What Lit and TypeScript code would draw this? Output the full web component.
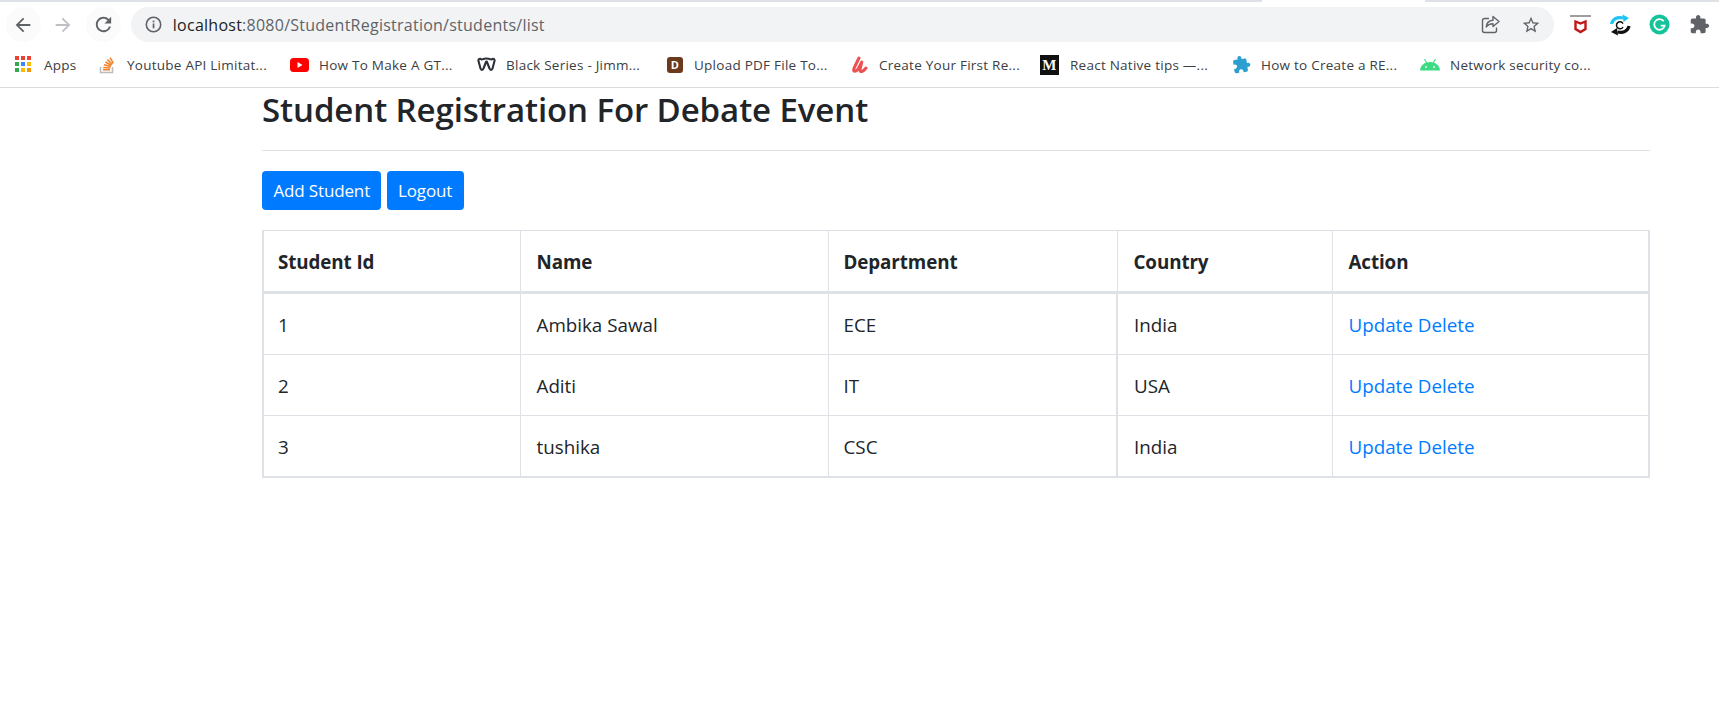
import { LitElement, css, html, svg } from "lit";
import { customElement } from "lit/decorators.js";
import { styleMap } from "lit/directives/style-map.js";

const students = [
  { id: 1, name: "Ambika Sawal", department: "ECE", country: "India" },
  { id: 2, name: "Aditi", department: "IT", country: "USA" },
  { id: 3, name: "tushika", department: "CSC", country: "India" },
];

const appsIcon = svg`<svg width="17" height="17" viewBox="0 0 17 17">
  <rect x="0" y="0" width="4" height="4" fill="#ea4335"/><rect x="6" y="0" width="4" height="4" fill="#ea4335"/><rect x="12" y="0" width="4" height="4" fill="#ea4335"/>
  <rect x="0" y="6" width="4" height="4" fill="#34a853"/><rect x="6" y="6" width="4" height="4" fill="#4285f4"/><rect x="12" y="6" width="4" height="4" fill="#fbbc04"/>
  <rect x="0" y="12" width="4" height="4" fill="#34a853"/><rect x="6" y="12" width="4" height="4" fill="#fbbc04"/><rect x="12" y="12" width="4" height="4" fill="#f29900"/>
</svg>`;

const stackIcon = svg`<svg width="16" height="18" viewBox="0 0 16 18">
  <path d="M1.5 11v5.5h12V11" fill="none" stroke="#bcbbbb" stroke-width="1.5"/>
  <path d="M4 13.7h7M4.3 11.4l7 .6M5 8.8l6.8 1.8M6.4 6l6 3.4M8.4 3.6l5 4.8M11 1.6l3.4 5.6" stroke="#f48024" stroke-width="1.5" fill="none"/>
</svg>`;

const youtubeIcon = svg`<svg width="19" height="14" viewBox="0 0 19 14">
  <rect width="19" height="14" rx="3.5" fill="#ff0000"/><path d="M7.5 4l5 3-5 3z" fill="#fff"/>
</svg>`;

const weeblyIcon = svg`<svg width="19" height="15" viewBox="0 0 19 15">
  <path d="M4.500 2.500C3 1 1 2 1.500 4l2 7.500c.5 1.800 2.400 1.800 3 0L9 5c.2-.7.8-.7 1 0l2.500 6.500c.6 1.800 2.500 1.800 3 0l2-7.500c.5-2-1.500-3-3-1.500M6 2.200c1.500-1 5.500-1 7 0" fill="none" stroke="#2b3136" stroke-width="2.100" stroke-linecap="round" stroke-linejoin="round"/>
</svg>`;

const udemyIcon = svg`<svg width="20" height="18" viewBox="0 0 20 18">
  <path d="M9 2C7 6 5 10 3.800 13c-.8 3 2.200 3.200 4.200.2L11.800 6c-.6 3-1.600 6-1.800 8-.2 2.500 3 2 6-2" fill="none" stroke="#ec5252" stroke-width="3" stroke-linecap="round" stroke-linejoin="round"/>
</svg>`;

const puzzleBlue = svg`<svg width="19" height="19" viewBox="0 0 24 24">
  <g transform="rotate(-8 12 12)"><path fill="#2a9fd0" d="M20.500 11H19V7c0-1.100-.9-2-2-2h-4V3.500C13 2.120 11.880 1 10.500 1S8 2.120 8 3.500V5H4c-1.100 0-1.990.9-1.990 2v3.800H3.500c1.490 0 2.700 1.210 2.700 2.700s-1.210 2.700-2.700 2.700H2V20c0 1.100.9 2 2 2h3.800v-1.500c0-1.490 1.210-2.700 2.700-2.700 1.490 0 2.700 1.210 2.700 2.700V22H17c1.100 0 2-.9 2-2v-4h1.500c1.380 0 2.500-1.120 2.500-2.500S21.880 11 20.500 11z"/></g>
</svg>`;

const androidIcon = svg`<svg width="20" height="12" viewBox="0 0 20 12">
  <path d="M0 11.500C.3 6.500 4.500 3 10 3s9.700 3.500 10 8.500z" fill="#3ddc84"/>
  <path d="M4.500 0l2.500 4.500M15.500 0L13 4.500" stroke="#3ddc84" stroke-width="1.100"/>
  <circle cx="6" cy="8" r=".9" fill="#fff"/><circle cx="14" cy="8" r=".9" fill="#fff"/>
</svg>`;

// widths hold each bookmark's slot, so the next favicon lands where Chrome put it
const bookmarks = [
  { label: "Apps", width: 84, gap: 12, icon: html`${appsIcon}` },
  { label: "Youtube API Limitat...", width: 191, gap: 12, icon: html`${stackIcon}` },
  { label: "How To Make A GT...", width: 187, gap: 10, icon: html`${youtubeIcon}` },
  { label: "Black Series - Jimm...", width: 190, gap: 10, icon: html`${weeblyIcon}` },
  { label: "Upload PDF File To...", width: 183, gap: 11, icon: html`<span class="fav-d">D</span>` },
  { label: "Create Your First Re...", width: 190, gap: 9, icon: html`${udemyIcon}` },
  { label: "React Native tips —...", width: 192, gap: 11, icon: html`<span class="fav-m">M</span>` },
  { label: "How to Create a RE...", width: 188, gap: 10, icon: html`${puzzleBlue}` },
  { label: "Network security co...", width: 200, gap: 10, icon: html`${androidIcon}` },
];

@customElement("app-root")
export class AppRoot extends LitElement {
  renderToolbar() {
    return html`
      <div class="toolbar">
        <div class="nav nav--hover">
          <svg width="22" height="22" viewBox="0 0 24 24"><path fill="#5f6368" d="M20 11H7.830l5.590-5.590L12 4l-8 8 8 8 1.410-1.410L7.830 13H20z"/></svg>
        </div>
        <div class="nav">
          <svg width="22" height="22" viewBox="0 0 24 24"><path fill="#bdc1c6" d="M4 11h12.170l-5.590-5.590L12 4l8 8-8 8-1.410-1.410L16.170 13H4z"/></svg>
        </div>
        <div class="nav nav--hover">
          <svg width="23" height="23" viewBox="0 0 24 24"><path fill="#5f6368" d="M17.650 6.350A7.958 7.958 0 0 0 12 4c-4.420 0-7.990 3.580-7.990 8s3.570 8 7.990 8c3.730 0 6.840-2.550 7.730-6h-2.080A5.990 5.990 0 0 1 12 18c-3.310 0-6-2.690-6-6s2.690-6 6-6c1.660 0 3.140.69 4.220 1.780L13 11h7V4l-2.350 2.350z"/></svg>
        </div>
        <div class="omnibox">
          <svg class="info" width="17" height="17" viewBox="0 0 17 17">
            <circle cx="8.500" cy="8.500" r="7.200" fill="none" stroke="#5f6368" stroke-width="1.600"/>
            <rect x="7.700" y="7.500" width="1.700" height="4.800" fill="#5f6368"/><rect x="7.700" y="4.600" width="1.700" height="1.700" fill="#5f6368"/>
          </svg>
          <span class="url"><span class="url__host">localhost</span>:8080/StudentRegistration/students/list</span>
          <svg class="share" width="19" height="19" viewBox="0 0 19 19">
            <path d="M8 3.500H3.500a2 2 0 0 0-2 2v10a2 2 0 0 0 2 2h10a2 2 0 0 0 2-2v-3" fill="none" stroke="#5f6368" stroke-width="1.400"/>
            <path d="M12 1.500l6 5-6 5V8.700c-3.300 0-5.300 1-6.700 3.300.3-3.800 2.700-6.400 6.700-6.700z" fill="none" stroke="#5f6368" stroke-width="1.400" stroke-linejoin="round"/>
          </svg>
          <svg class="star" width="20" height="20" viewBox="0 0 24 24"><path fill="#5f6368" d="M22 9.240l-7.190-.62L12 2 9.190 8.630 2 9.240l5.460 4.730L5.820 21 12 17.270 18.180 21l-1.630-7.030L22 9.240zM12 15.400l-3.760 2.270 1-4.280-3.320-2.880 4.380-.38L12 6.100l1.710 4.040 4.380.38-3.320 2.880 1 4.280L12 15.400z"/></svg>
        </div>
        <div class="extensions">
          <div class="ext">
            <svg width="22" height="20" viewBox="0 0 22 20">
              <rect x="0" y="0" width="21" height="2" fill="#9e9e9e"/>
              <path d="M5.500 6.500l5 2 5-2v7.500l-5 3-5-3z" fill="none" stroke="#c01818" stroke-width="2.400"/>
            </svg>
          </div>
          <div class="ext">
            <svg width="22" height="22" viewBox="0 0 22 22">
              <path d="M2.500 10C3.500 5 8 2.500 14 4" fill="none" stroke="#1fc4f4" stroke-width="3.200"/>
              <path d="M13.500 .5l6.500 3.500-5.500 4z" fill="#1fc4f4"/>
              <path d="M20 12c-1 5-5.500 7.500-11.500 6" fill="none" stroke="#111" stroke-width="3.200"/>
              <path d="M9 21.500L2 18l6-4z" fill="#111"/>
              <path d="M14 9.500a3.500 3.500 0 1 0 0 3.500" fill="none" stroke="#111" stroke-width="1.500"/>
            </svg>
          </div>
          <div class="ext">
            <svg width="21" height="21" viewBox="0 0 21 21">
              <circle cx="10.500" cy="10.500" r="10" fill="#15c39a"/>
              <path d="M14.800 7.300a5.300 5.300 0 1 0 .9 4.300h-4" fill="none" stroke="#fff" stroke-width="1.800"/>
            </svg>
          </div>
          <div class="ext">
            <svg width="21" height="21" viewBox="0 0 24 24"><path fill="#5f6368" d="M20.500 11H19V7c0-1.100-.9-2-2-2h-4V3.500C13 2.120 11.880 1 10.500 1S8 2.120 8 3.500V5H4c-1.100 0-1.990.9-1.990 2v3.800H3.500c1.490 0 2.700 1.210 2.700 2.700s-1.210 2.700-2.700 2.700H2V20c0 1.100.9 2 2 2h3.800v-1.500c0-1.490 1.210-2.700 2.700-2.700 1.490 0 2.700 1.210 2.700 2.700V22H17c1.100 0 2-.9 2-2v-4h1.500c1.380 0 2.500-1.120 2.500-2.500S21.880 11 20.500 11z"/></svg>
          </div>
        </div>
      </div>
    `;
  }

  render() {
    return html`
      <div class="tabstrip"><span class="tabstrip__gap"></span></div>
      ${this.renderToolbar()}
      <div class="bookmarks">
        ${bookmarks.map(
          (b) => html`<div
            class="bookmark"
            style=${styleMap({ width: `${b.width}px`, gap: `${b.gap}px` })}
          >
            ${b.icon}<span>${b.label}</span>
          </div>`,
        )}
      </div>
      <main class="page">
        <h2 class="title">Student Registration For Debate Event</h2>
        <hr class="rule" />
        <div class="actions">
          <a class="btn">Add Student</a>
          <a class="btn btn--logout">Logout</a>
        </div>
        <table class="students">
          <colgroup>
            <col class="col-id" />
            <col class="col-name" />
            <col class="col-dept" />
            <col class="col-country" />
            <col class="col-action" />
          </colgroup>
          <thead>
            <tr>
              <th>Student Id</th>
              <th>Name</th>
              <th>Department</th>
              <th>Country</th>
              <th>Action</th>
            </tr>
          </thead>
          <tbody>
            ${students.map(
              (s) => html`<tr>
                <td>${s.id}</td>
                <td>${s.name}</td>
                <td>${s.department}</td>
                <td>${s.country}</td>
                <td><a class="link">Update</a> <a class="link">Delete</a></td>
              </tr>`,
            )}
          </tbody>
        </table>
      </main>
    `;
  }

  static styles = css`
    :host {
      display: block;
      height: 703px;
      overflow: hidden;
      background: #fff;
      font-family: "Open Sans", "Noto Sans", sans-serif;
      color: #212529;
    }

    .tabstrip {
      height: 2px;
      background: #dee1e6;
      padding-left: 1262px;
    }

    .tabstrip__gap {
      display: block;
      width: 163px;
      height: 2px;
      background: #fff;
    }

    .toolbar {
      display: flex;
      align-items: center;
      height: 40px;
      padding-top: 5px;
      padding-left: 6px;
      box-sizing: border-box;
      gap: 5px;
    }

    .nav {
      width: 35px;
      height: 35px;
      border-radius: 50%;
      display: flex;
      align-items: center;
      justify-content: center;
    }

    .nav--hover {
      background: #fbfbfb;
    }

    .omnibox {
      margin-left: 5px;
      width: 1426px;
      height: 35px;
      box-sizing: border-box;
      border-radius: 18px;
      background: #f1f3f4;
      display: flex;
      align-items: center;
      padding-left: 14px;
    }

    .url {
      margin-left: 11px;
      flex: 1;
      font-size: 16px;
      letter-spacing: 0.25px;
      color: #5f6368;
    }

    .url__host {
      color: #202124;
    }

    .share {
      margin-right: 21px;
    }

    .star {
      margin-right: 13px;
    }

    .extensions {
      margin-left: 2px;
      display: flex;
    }

    .ext {
      width: 39.5px;
      height: 35px;
      display: flex;
      align-items: center;
      justify-content: center;
    }

    .bookmarks {
      display: flex;
      align-items: center;
      height: 46px;
      padding-left: 15px;
      box-sizing: border-box;
      border-bottom: 1px solid #dadce0;
    }

    .bookmark {
      display: flex;
      align-items: center;
      flex: none;
      font-size: 13.500px;
      letter-spacing: 0.25px;
      white-space: nowrap;
      color: #3c4043;
    }

    .fav-d {
      width: 16px;
      height: 16px;
      border-radius: 3px;
      background: #6b3a1e;
      color: #fff;
      font-size: 11px;
      font-weight: 700;
      text-align: center;
      line-height: 16px;
    }

    .fav-m {
      width: 19px;
      height: 20px;
      background: #111;
      color: #fff;
      font-family: "Liberation Serif", serif;
      font-size: 15px;
      font-weight: 700;
      text-align: center;
      line-height: 20px;
    }

    .page {
      padding-left: 262px;
      width: 1388px;
    }

    .title {
      margin: 0;
      font-size: 33px;
      font-weight: 600;
      line-height: 44px;
      letter-spacing: -0.09px;
      height: 44px;
    }

    .rule {
      margin: 18px 0 0;
      border: 0;
      border-top: 1px solid #dfe2e6;
    }

    .actions {
      margin-top: 20px;
      display: flex;
      gap: 6px;
    }

    .btn {
      height: 39px;
      box-sizing: border-box;
      padding: 0 10.500px 0 11.500px;
      border-radius: 4px;
      background: #007bff;
      color: #fff;
      font-size: 17px;
      line-height: 39px;
      letter-spacing: -0.15px;
    }

    .btn--logout {
      padding-right: 12px;
    }

    .students {
      margin-top: 20px;
      width: 1386px;
      table-layout: fixed;
      border-collapse: collapse;
      border: 2px solid #dee2e6;
      border-top-width: 1px;
      font-size: 18.800px;
    }

    .col-id {
      width: 257px;
    }
    .col-name {
      width: 308px;
    }
    .col-dept {
      width: 289px;
    }
    .col-country {
      width: 215px;
    }
    .col-action {
      width: 317px;
    }

    th,
    td {
      padding: 0 15px;
      text-align: left;
      border: 1px solid #dee2e6;
    }

    th {
      height: 59px;
      padding-top: 1px;
      font-size: 18.800px;
      letter-spacing: -0.1px;
      font-weight: 700;
      border-bottom: 3px solid #dee2e6;
    }

    td {
      height: 58px;
      padding-top: 2px;
      padding-bottom: 0;
      line-height: 1.33;
    }

    th:first-child,
    td:first-child {
      padding-left: 14px;
    }

    th:nth-child(2),
    td:nth-child(2),
    th:nth-child(n + 4),
    td:nth-child(n + 4) {
      padding-left: 16px;
    }

    td:nth-child(3) {
      border-right-width: 2px;
    }

    .link {
      color: #007bff;
    }
  `;
}

declare global {
  interface HTMLElementTagNameMap {
    "app-root": AppRoot;
  }
}
